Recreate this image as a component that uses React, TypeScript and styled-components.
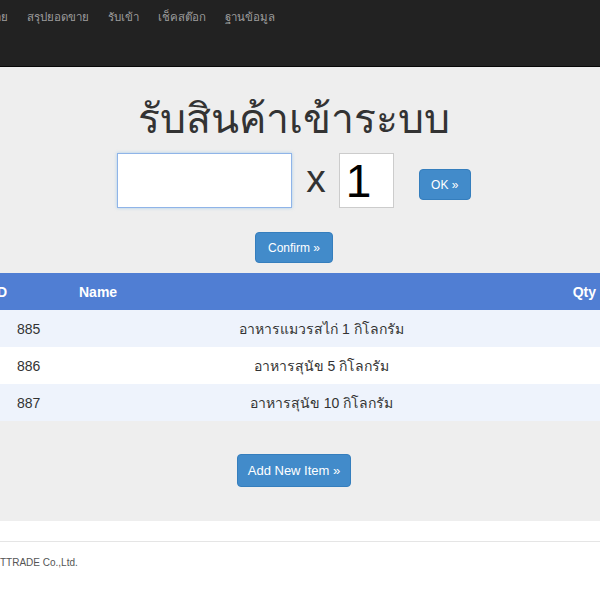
import React from 'react';
import styled, { createGlobalStyle } from 'styled-components';

const GlobalStyle = createGlobalStyle`
  html, body {
    margin: 0;
    padding: 0;
    background: #fff;
    overflow: hidden;
  }
  body {
    font-family: "Liberation Sans", Arial, "Noto Sans", sans-serif;
    color: #333;
    font-size: 14px;
  }
  * { box-sizing: border-box; }
`;

const Page = styled.div`
  width: 620px;
  margin-left: -16px;
`;

const NavBar = styled.nav`
  height: 67px;
  background: #222;
  border-bottom: 1px solid #080808;
  display: flex;
  align-items: flex-start;
  padding: 9px 0 0 3px;
  gap: 19px;
`;

const NavItem = styled.a`
  font-size: 11.5px;
  color: #9d9d9d;
  text-decoration: none;
  line-height: 16px;
`;

const Jumbotron = styled.section`
  background: #eee;
  padding: 24px 0 34px;
  display: flex;
  flex-direction: column;
  align-items: center;
`;

const Title = styled.h1`
  margin: 0;
  font-size: 41px;
  font-weight: 500;
  line-height: 56px;
  color: #333;
`;

const EntryRow = styled.div`
  display: flex;
  align-items: center;
  margin-top: 4px;
`;

const TextBox = styled.input<{ wide?: boolean }>`
  width: ${({ wide }) => (wide ? '175px' : '55px')};
  height: 55px;
  border: 1px solid ${({ wide }) => (wide ? '#8fb4e8' : '#ccc')};
  box-shadow: ${({ wide }) => (wide ? '0 0 3px rgba(102,175,233,.5)' : 'none')};
  background: #fff;
  font-family: "Liberation Sans", Arial, sans-serif;
  font-size: 46px;
  padding: 0 6px;
  color: #000;
  outline: none;
`;

const Times = styled.span`
  font-size: 39px;
  color: #333;
  margin: 0 13px 0 14px;
  line-height: 55px;
  padding-bottom: 4px;
`;

const Button = styled.button<{ size?: 'sm' | 'md' }>`
  background: #428bca;
  border: 1px solid #357ebd;
  border-radius: 4px;
  color: #fff;
  font-family: "Liberation Sans", Arial, sans-serif;
  font-size: ${({ size }) => (size === 'sm' ? '12px' : '13px')};
  height: ${({ size }) => (size === 'sm' ? '31px' : '33px')};
  padding: 0 12px;
  cursor: pointer;
`;

const OkButton = styled(Button)`
  margin: 8px 0 0 25px;
  width: 52px;
  padding: 0;
`;

const ConfirmButton = styled(Button)`
  margin-top: 22px;
  width: 78px;
  padding: 0;
`;

const AddButton = styled(Button)`
  margin-top: 33px;
  width: 114px;
  padding: 0;
  font-size: 13px;
`;

const Table = styled.div`
  width: 100%;
  margin-top: 10px;
`;

const Row = styled.div<{ head?: boolean; striped?: boolean }>`
  display: grid;
  grid-template-columns: 87px 1fr 32px;
  height: 37px;
  align-items: center;
  background: ${({ head, striped }) => (head ? '#507ed3' : striped ? '#eef3fc' : '#fff')};
  color: ${({ head }) => (head ? '#fff' : '#333')};
  font-weight: ${({ head }) => (head ? 'bold' : 'normal')};
  font-size: 14px;
`;

const Cell = styled.div<{ align?: 'left' | 'center' | 'right' }>`
  text-align: ${({ align }) => align || 'left'};
  padding: 0 8px;
  white-space: nowrap;
`;

const QtyCell = styled.div`
  text-align: right;
  padding-right: 8px;
  white-space: nowrap;
  direction: rtl;
`;

const IdCell = styled.div<{ head?: boolean }>`
  padding-left: ${({ head }) => (head ? '9px' : '33px')};
`;

const Gap = styled.div`
  height: 20px;
`;

const Footer = styled.footer`
  border-top: 1px solid #e5e5e5;
  padding: 15px 0 0 16px;
  font-size: 10px;
  color: #555;
`;

const rows = [
  { id: 885, name: 'อาหารแมวรสไก่ 1 กิโลกรัม' },
  { id: 886, name: 'อาหารสุนัข 5 กิโลกรัม' },
  { id: 887, name: 'อาหารสุนัข 10 กิโลกรัม' },
];

export default function App() {
  return (
    <>
      <GlobalStyle />
      <Page>
        <NavBar>
          <NavItem href="#">ขาย</NavItem>
          <NavItem href="#">สรุปยอดขาย</NavItem>
          <NavItem href="#">รับเข้า</NavItem>
          <NavItem href="#">เช็คสต๊อก</NavItem>
          <NavItem href="#">ฐานข้อมูล</NavItem>
        </NavBar>
        <Jumbotron>
          <Title>รับสินค้าเข้าระบบ</Title>
          <EntryRow>
            <TextBox wide />
            <Times>x</Times>
            <TextBox defaultValue="1" />
            <OkButton size="sm">OK »</OkButton>
          </EntryRow>
          <ConfirmButton size="sm">Confirm »</ConfirmButton>
          <Table>
            <Row head>
              <IdCell head>ID</IdCell>
              <Cell>Name</Cell>
              <QtyCell>Qty</QtyCell>
            </Row>
            {rows.map((r, i) => (
              <Row key={r.id} striped={i % 2 === 0}>
                <IdCell>{r.id}</IdCell>
                <Cell align="center">{r.name}</Cell>
                <QtyCell />
              </Row>
            ))}
          </Table>
          <AddButton>Add New Item »</AddButton>
        </Jumbotron>
        <Gap />
        <Footer>TTRADE Co.,Ltd.</Footer>
      </Page>
    </>
  );
}
